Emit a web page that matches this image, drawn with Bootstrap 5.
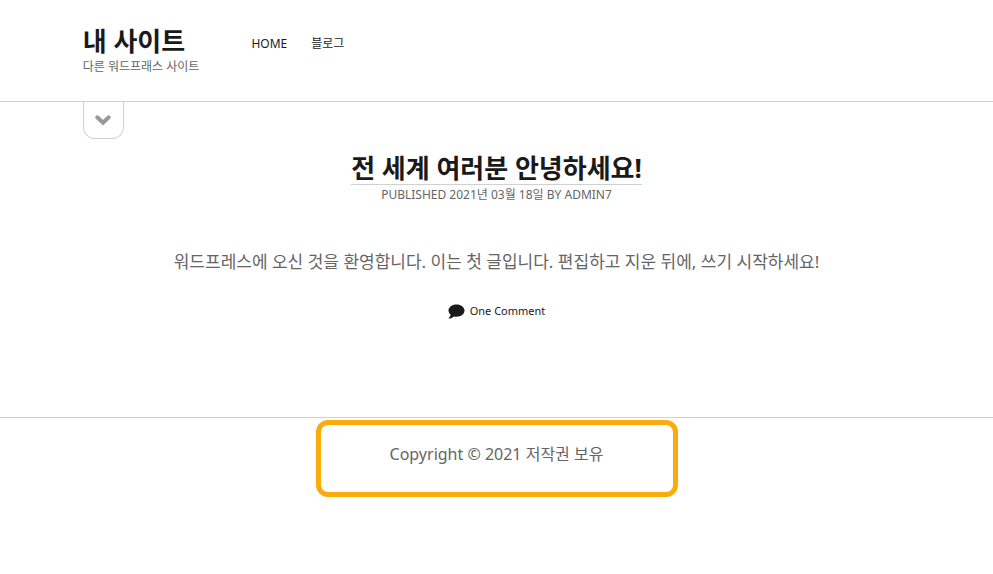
<!DOCTYPE html>
<html lang="ko">
<head>
<meta charset="utf-8">
<meta name="viewport" content="width=device-width, initial-scale=1">
<title>내 사이트</title>
<link href="https://cdn.jsdelivr.net/npm/bootstrap@5.3.0/dist/css/bootstrap.min.css" rel="stylesheet">
<style>
body { font-family: "Noto Sans", "Noto Sans CJK KR", sans-serif; font-size: 16px; line-height: 24px; color: #656565; background: #fff; }
a, a:hover { color: #1a1a1a; text-decoration: none; }
.rule-bottom { border-bottom: 1px solid #d1d1d1; }
.rule-top { border-top: 1px solid #d1d1d1; }
.site-header { padding: 25px 0 24px; }
.headline { font-size: 26px; line-height: 32px; font-weight: 700; }
.small-text { font-size: 12px; line-height: 20px; }
.site-menu { gap: 24px; padding-top: 9px; }
.site-brand { margin-right: 52px; }
.drawer-toggle { width: 41px; height: 37px; border: 1px solid #d1d1d1; border-top: 0; border-radius: 0 0 12px 12px; background: #fff; }
.post { padding: 13px 0 92px; }
.post-text { font-size: 17px; line-height: 26px; margin: 44px 0 26px; }
.comment-link { gap: 5px; font-size: 11px; line-height: 20px; }
.copyright-box { width: 362px; max-width: 100%; margin-top: 2px; padding: 17px 8px 26px; border: 5px solid #fbab0c; border-radius: 12px; }
</style>
<script src="https://cdn.jsdelivr.net/npm/bootstrap@5.3.0/dist/js/bootstrap.bundle.min.js"></script>
</head>
<body>
<header class="site-header rule-bottom">
  <div class="row g-0">
    <div class="col-10 offset-1 d-flex align-items-start">
      <div class="site-brand">
        <h1 class="headline mb-0"><a href="#">내 사이트</a></h1>
        <p class="small-text mb-0">다른 워드프래스 사이트</p>
      </div>
      <nav aria-label="Primary">
        <ul class="site-menu small-text list-unstyled d-flex mb-0">
          <li><a href="#">HOME</a></li>
          <li><a href="#">블로그</a></li>
        </ul>
      </nav>
    </div>
  </div>
</header>
<div class="row g-0">
  <div class="col-10 offset-1">
    <button type="button" class="drawer-toggle d-flex align-items-center justify-content-center p-0" aria-label="Open sidebar">
      <svg width="16" height="11" viewBox="0 0 16 11" fill="none" stroke="#999" stroke-width="4" stroke-linecap="round" stroke-linejoin="miter"><path d="M2.300 2.300 8 7.700 13.700 2.300"/></svg>
    </button>
  </div>
</div>
<main class="post text-center">
  <article class="row g-0">
    <div class="col-10 offset-1">
      <h2 class="headline rule-bottom d-inline-block align-top mb-0"><a href="#">전 세계 여러분 안녕하세요!</a></h2>
      <p class="small-text mb-0">PUBLISHED 2021년 03월 18일 BY ADMIN7</p>
      <p class="post-text">워드프레스에 오신 것을 환영합니다. 이는 첫 글입니다. 편집하고 지운 뒤에, 쓰기 시작하세요!</p>
      <a href="#" class="comment-link d-inline-flex align-items-center align-top">
        <svg width="17" height="15" viewBox="0 0 17 15" fill="#1a1a1a"><path d="M8.500.5C4 .5.5 3.200.5 6.600c0 1.700.8 3.100 2.100 4.200-.2 1.300-.9 2.400-1.800 3.100-.3.300-.2.700.2.700 1.900 0 3.600-.9 4.800-2.100.8.200 1.700.3 2.700.3 4.500 0 8-2.700 8-6.200S13 .5 8.500.5z"/></svg>
        <span>One Comment</span>
      </a>
    </div>
  </article>
</main>
<footer class="rule-top text-center">
  <div class="copyright-box mx-auto">Copyright © 2021 저작권 보유</div>
</footer>
</body>
</html>
